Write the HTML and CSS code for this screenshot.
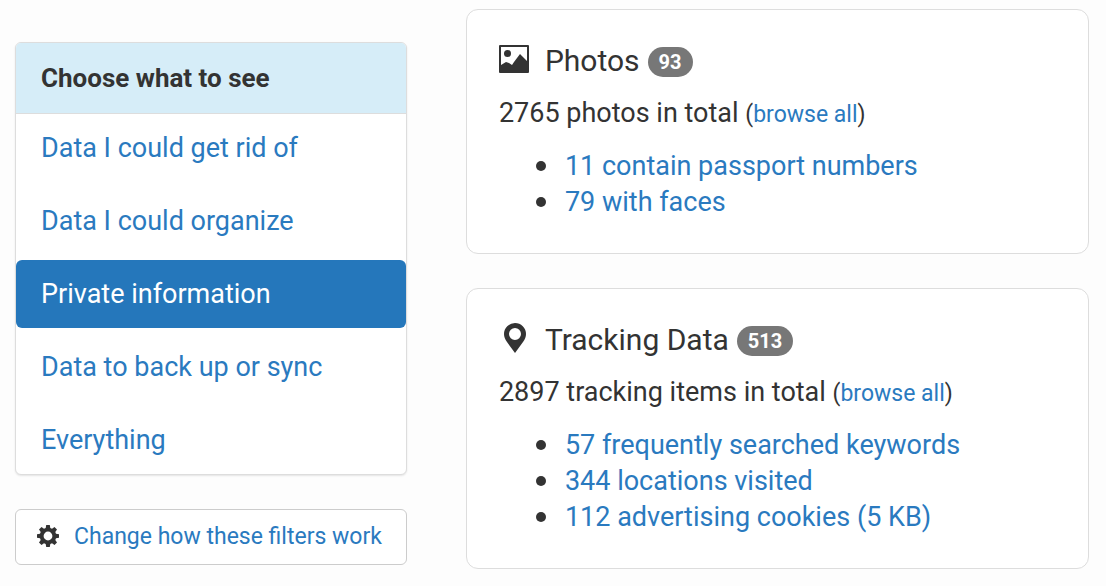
FILE: index.html
```html
<!DOCTYPE html>
<html lang="en">
<head>
    <meta charset="UTF-8" />
    <meta name="viewport" content="width=device-width, initial-scale=1.0"/>
    <title>Your data</title>

    <link rel="stylesheet" href="styles.css">
</head>
<body>
    <div class="container">
        <aside class="sidebar">
            <nav class="panel">
                <h2 class="panel-heading">Choose what to see</h2>
                <ul class="filters">
                    <li><a href="#rid">Data I could get rid of</a></li>
                    <li><a href="#organize">Data I could organize</a></li>
                    <li><a href="#private" class="active">Private information</a></li>
                    <li><a href="#backup">Data to back up or sync</a></li>
                    <li><a href="#everything">Everything</a></li>
                </ul>
            </nav>

            <button type="button" class="settings">
                <svg class="cog" viewBox="0 0 24 26" aria-hidden="true">
                    <path fill-rule="evenodd" d="M10.200 1h3.600l.5 3 1.700.7 2.500-1.700 2.500 2.500L19.300 8l.7 1.700 3 .5v3.600l-3 .5-.7 1.700 1.700 2.500-2.500 2.500-2.500-1.700-1.700.7-.5 3h-3.600l-.5-3-1.700-.7L5.500 21 3 18.500 4.700 16 4 14.300l-3-.5v-3.600l3-.5L4.700 8 3 5.500 5.500 3 8 4.700 9.700 4zM12 7.600a4.400 4.400 0 1 0 0 8.800 4.400 4.400 0 0 0 0-8.800z"/>
                </svg>
                <span>Change how these filters work</span>
            </button>
        </aside>

        <main class="results">
            <section class="card">
                <h3>
                    <svg class="icon" viewBox="0 0 32 34" aria-hidden="true">
                        <path fill-rule="evenodd" d="M1 1h28q1 0 1 1v26q0 1-1 1H1q-1 0-1-1V2q0-1 1-1zM2 3v18l5-3 3 1 3 2 2-3 6-8 7 7V3z"/>
                        <circle cx="8.500" cy="9.500" r="3.500"/>
                    </svg>
                    <span>Photos</span>
                    <span class="badge">93</span>
                </h3>
                <p>2765 photos in total <small>(<a href="#photos">browse all</a>)</small></p>
                <ul>
                    <li><a href="#passports">11 contain passport numbers</a></li>
                    <li><a href="#faces">79 with faces</a></li>
                </ul>
            </section>

            <section class="card">
                <h3>
                    <svg class="icon" viewBox="0 0 32 34" aria-hidden="true">
                        <path fill-rule="evenodd" d="M16 0A11 11 0 0 0 5 11c0 3 1 5 3 8l8 11 8-11c2-3 3-5 3-8A11 11 0 0 0 16 0zm0 5a6 6 0 1 1 0 12 6 6 0 0 1 0-12z"/>
                    </svg>
                    <span>Tracking Data</span>
                    <span class="badge">513</span>
                </h3>
                <p>2897 tracking items in total <small>(<a href="#tracking">browse all</a>)</small></p>
                <ul>
                    <li><a href="#keywords">57 frequently searched keywords</a></li>
                    <li><a href="#locations">344 locations visited</a></li>
                    <li><a href="#cookies">112 advertising cookies (5 KB)</a></li>
                </ul>
            </section>
        </main>
    </div>
</body>
</html>
```

FILE: styles.css
```css
* {
    box-sizing: border-box;
}

body {
    margin: 0;
    font-family: Roboto, "Liberation Sans", sans-serif;
    font-size: 27px;
    line-height: 36px;
    color: #333;
    background: #fdfdfd;
}

a {
    color: #2a7abf;
    text-decoration: none;
}

h2, h3, p, ul {
    margin: 0;
    padding: 0;
}

ul {
    list-style: none;
}

.container {
    display: grid;
    grid-template-columns: 39fr 62fr;
    column-gap: 59px;
    align-items: start;
    padding: 9px 17px 16px 15px;
}

.sidebar {
    display: flex;
    flex-direction: column;
    gap: 34px;
    padding-top: 33px;
}

.panel {
    background: #fff;
    border: 1px solid #ddd;
    border-radius: 6px;
    box-shadow: 0 1px 2px rgba(0, 0, 0, 0.1);
}

.panel-heading {
    padding: 17px 25px;
    font-size: 26px;
    line-height: 36px;
    background: #d6edf8;
    border-bottom: 1px solid #ddd;
    border-radius: 5px 5px 0 0;
}

.filters {
    display: flex;
    flex-direction: column;
    gap: 5px;
}

.filters a {
    display: block;
    padding: 16px 25px;
    border-radius: 6px;
}

.filters .active {
    color: #fff;
    background: #2577bb;
}

.settings {
    display: flex;
    align-items: center;
    gap: 14px;
    padding: 9px 20px;
    font-family: inherit;
    font-size: 23px;
    line-height: 36px;
    color: #2a7abf;
    white-space: nowrap;
    background: #fff;
    border: 1px solid #ccc;
    border-radius: 6px;
    cursor: pointer;
}

.cog {
    flex: none;
    width: 24px;
    height: 26px;
    fill: #333;
}

.results {
    display: flex;
    flex-direction: column;
    gap: 34px;
}

.card {
    padding: 33px 32px;
    background: #fff;
    border: 1px solid #ddd;
    border-radius: 12px;
}

.card h3 {
    display: flex;
    align-items: center;
    font-size: 30px;
    font-weight: 400;
    line-height: 36px;
    margin-bottom: 16px;
}

.icon {
    width: 32px;
    height: 34px;
    margin-right: 14px;
    fill: #333;
}

.badge {
    margin: 2px 0 0 8px;
    padding: 4px 11px;
    font-size: 20px;
    font-weight: 700;
    line-height: 22px;
    color: #fff;
    background: #777;
    border-radius: 15px;
}

.card p {
    margin-bottom: 15px;
}

small {
    font-size: 23px;
}

.card li {
    display: flex;
    align-items: center;
    gap: 19px;
    padding-left: 37px;
}

.card li::before {
    content: "";
    flex: none;
    width: 10px;
    height: 10px;
    background: #333;
    border-radius: 50%;
}
```
